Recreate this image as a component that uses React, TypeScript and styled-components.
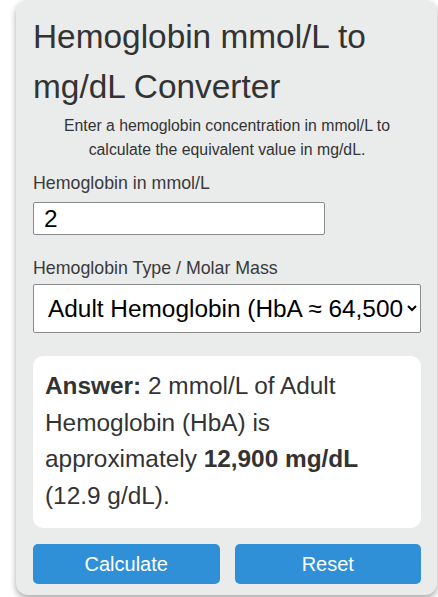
import React, { useState } from 'react';
import styled, { createGlobalStyle } from 'styled-components';

const GlobalStyle = createGlobalStyle`
  html, body {
    margin: 0;
    padding: 0;
    background: #ffffff;
    font-family: "Liberation Sans", Arial, sans-serif;
  }
`;

const Card = styled.div`
  box-sizing: border-box;
  margin: 0 1px 4px 16px;
  padding: 12px 16px 11px 17px;
  background: #eaebeb;
  border-radius: 12px;
  box-shadow: 0 3px 6px rgba(0, 0, 0, 0.35);
  color: #333333;
`;

const Title = styled.h1`
  margin: 0;
  font-size: 33.4px;
  font-weight: normal;
  line-height: 50px;
  color: #333333;
`;

const Intro = styled.p`
  margin: 2px 0 0;
  font-size: 15.8px;
  line-height: 24px;
  text-align: center;
`;

const Label = styled.label<{ $top: number }>`
  display: block;
  margin-top: ${p => p.$top}px;
  font-size: 17.8px;
  line-height: 24px;
  color: #3a3a3a;
`;

const NumberInput = styled.input`
  display: block;
  box-sizing: border-box;
  margin-top: 7px;
  width: 292px;
  height: 33px;
  padding: 0 10px;
  border: 1px solid #8a8a8a;
  border-radius: 2px;
  background: #ffffff;
  font-family: inherit;
  font-size: 24.4px;
  color: #000000;
`;

const Select = styled.select`
  display: block;
  box-sizing: border-box;
  margin-top: 4px;
  width: 100%;
  height: 49px;
  padding: 0 0 0 10px;
  border: 1px solid #8a8a8a;
  border-radius: 2px;
  background: #ffffff;
  font-family: inherit;
  font-size: 24.4px;
  color: #000000;
`;

const Answer = styled.div`
  margin-top: 23px;
  padding: 12px 12px 14px;
  background: #ffffff;
  border-radius: 10px;
  font-size: 24.4px;
  line-height: 1.5;
  color: #333333;
`;

const Strong = styled.strong`
  font-weight: bold;
`;

const Buttons = styled.div`
  display: grid;
  grid-template-columns: 1fr 1fr;
  gap: 15px;
  margin-top: 16px;
`;

const Button = styled.button`
  height: 40px;
  border: none;
  border-radius: 5px;
  background: #2f90d8;
  color: #ffffff;
  font-family: inherit;
  font-size: 20px;
  cursor: pointer;
`;

export default function App() {
  const [value, setValue] = useState('2');
  const [type, setType] = useState('hba');

  return (
    <>
      <GlobalStyle />
      <Card>
        <Title>Hemoglobin mmol/L to mg/dL Converter</Title>
        <Intro>
          Enter a hemoglobin concentration in mmol/L to calculate the equivalent value in mg/dL.
        </Intro>
        <Label $top={9} htmlFor="hb">Hemoglobin in mmol/L</Label>
        <NumberInput id="hb" value={value} onChange={e => setValue(e.target.value)} />
        <Label $top={21} htmlFor="type">Hemoglobin Type / Molar Mass</Label>
        <Select id="type" value={type} onChange={e => setType(e.target.value)}>
          <option value="hba">Adult Hemoglobin (HbA ≈ 64,500 g/mol)</option>
        </Select>
        <Answer>
          <Strong>Answer:</Strong> 2 mmol/L of Adult Hemoglobin (HbA) is approximately{' '}
          <Strong>12,900 mg/dL</Strong> (12.9 g/dL).
        </Answer>
        <Buttons>
          <Button>Calculate</Button>
          <Button onClick={() => setValue('')}>Reset</Button>
        </Buttons>
      </Card>
    </>
  );
}
